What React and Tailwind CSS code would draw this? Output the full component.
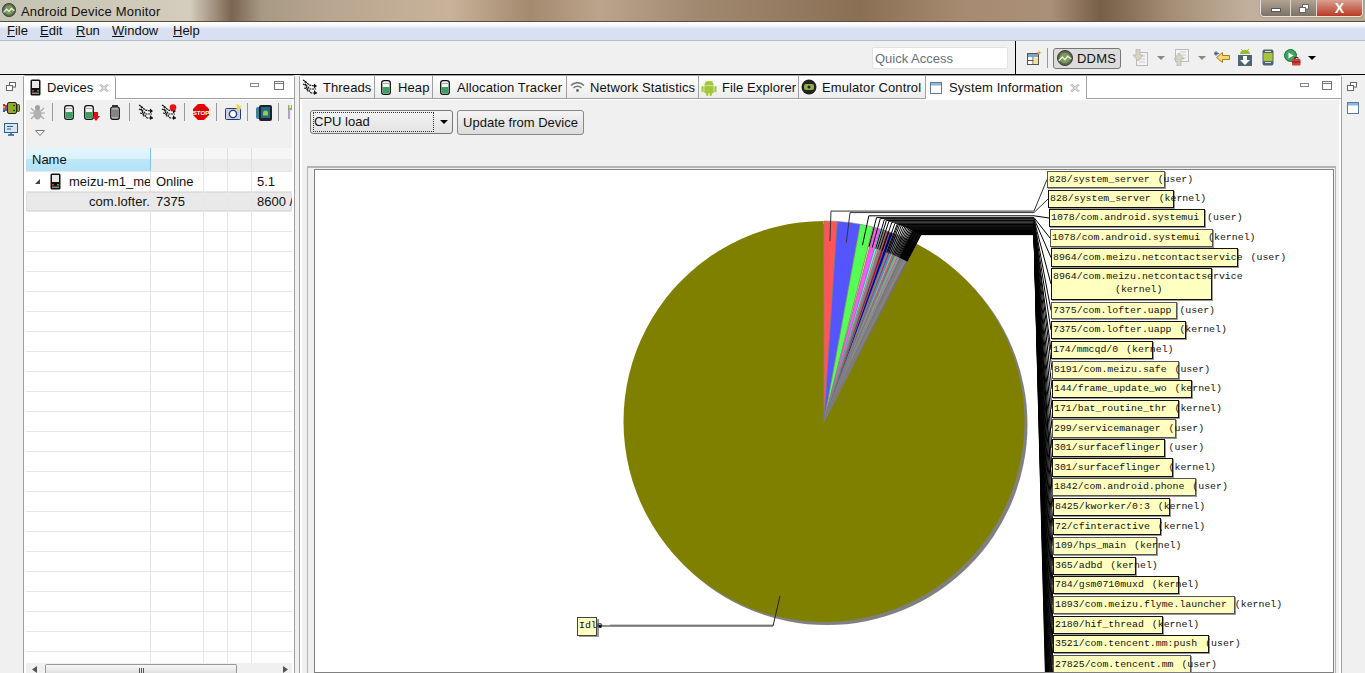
import React from "react";

const LABELS = [
  [1047, 1165, 171, 188, "828/system_server (user)"],
  [1048, 1174, 190, 208, "828/system_server (kernel)"],
  [1049, 1205, 209, 227, "1078/com.android.systemui (user)"],
  [1050, 1213, 229, 247, "1078/com.android.systemui (kernel)"],
  [1051, 1238, 248, 267, "8964/com.meizu.netcontactservice (user)"],
  [1051, 1212, 268, 300, "8964/com.meizu.netcontactservice"],
  [1051, 1177, 302, 319, "7375/com.lofter.uapp (user)"],
  [1051, 1186, 321, 339, "7375/com.lofter.uapp (kernel)"],
  [1051, 1153, 341, 359, "174/mmcqd/0 (kernel)"],
  [1052, 1179, 361, 379, "8191/com.meizu.safe (user)"],
  [1052, 1192, 380, 398, "144/frame_update_wo (kernel)"],
  [1052, 1179, 400, 418, "171/bat_routine_thr (kernel)"],
  [1052, 1176, 419, 438, "299/servicemanager (user)"],
  [1052, 1165, 439, 457, "301/surfaceflinger (user)"],
  [1052, 1173, 458, 477, "301/surfaceflinger (kernel)"],
  [1052, 1196, 478, 496, "1842/com.android.phone (user)"],
  [1053, 1170, 498, 516, "8425/kworker/0:3 (kernel)"],
  [1053, 1161, 518, 535, "72/cfinteractive (kernel)"],
  [1053, 1157, 537, 555, "109/hps_main (kernel)"],
  [1053, 1136, 557, 575, "365/adbd (kernel)"],
  [1053, 1179, 576, 594, "784/gsm0710muxd (kernel)"],
  [1053, 1235, 596, 614, "1893/com.meizu.flyme.launcher (kernel)"],
  [1053, 1163, 616, 634, "2180/hif_thread (kernel)"],
  [1053, 1209, 635, 653, "3521/com.tencent.mm:push (user)"],
  [1053, 1191, 655, 675, "27825/com.tencent.mm (user)"],
];

const COLORS = ["#ff5555","#5555ff","#55ff55","#ffff55","#ff55ff","#55ffff","#ffafaf","#808080","#c00000","#0000c0","#00c000","#c0c000","#c000c0","#00c0c0","#c0c0c0"];
const WIDTHS = [3.8,6.6,3.8,0.5,1.6,0.7,0.5,0.9,0.8,1.0,0.3,0.3,0.5,0.5,0.5,0.45,0.4,0.4,0.35,0.35,0.3,0.3,...Array(18).fill(2.65/18)];
const CX = 824, CY = 421.5, R = 200.5;
const pt = (deg, r, cx = CX, cy = CY) => {
  const a = (deg * Math.PI) / 180;
  return [cx + r * Math.sin(a), cy - r * Math.cos(a)];
};
const SLICES = (() => {
  let a = 0;
  return WIDTHS.map((w, i) => {
    const s = { from: a, to: a + w, mid: a + w / 2, color: COLORS[i % COLORS.length] };
    a += w;
    return s;
  });
})();
const arc = (from, to, r = R) => {
  const [x1, y1] = pt(from, r);
  const [x2, y2] = pt(to, r);
  return `M${CX} ${CY}L${x1} ${y1}A${r} ${r} 0 ${to - from > 180 ? 1 : 0} 1 ${x2} ${y2}Z`;
};

function Chart() {
  const end = SLICES[SLICES.length - 1].to;
  return (
    <svg width="1018" height="502" viewBox="315 170 1018 502" className="block bg-white">
      <circle cx={CX + 3} cy={CY + 3} r={R} fill="#808080" />
      <path d={arc(end, 359.9)} fill="#808000" />
      {SLICES.map((s, i) => (
        <path key={i} d={arc(s.from, s.to)} fill={s.color} stroke="#808080" strokeWidth="0.6" />
      ))}
      {SLICES.map((s, i) => {
        const [x1, y1] = pt(s.mid, R * 0.9);
        const [x2, y2] = pt(s.mid, R * 1.05);
        let lx = 1053, ly = 665 + (i - 24) * 20;
        if (i < LABELS.length) {
          lx = LABELS[i][0];
          ly = (LABELS[i][2] + LABELS[i][3]) / 2;
        }
        return (
          <polyline key={i} points={`${x1},${y1} ${x2},${y2} 1034,${y2} ${lx},${ly}`} fill="none" stroke={i < 2 ? "#333" : "#000"} strokeWidth="1" />
        );
      })}
      <line x1="610" y1="625" x2="773" y2="625" stroke="#999" strokeWidth="1" />
      <polyline points="780,596 773,626 600,626" fill="none" stroke="#222" strokeWidth="1" />
      <circle cx="600" cy="626" r="1.6" fill="#000" />
      <rect x="579" y="619" width="20" height="18" fill="#999" />
      <rect x="577.5" y="617.5" width="19" height="18" fill="#ffffc0" stroke="#444" />
      <text x="579" y="628" fontFamily="'Liberation Mono', monospace" fontSize="9.9" fill="#111">Idle</text>
      {LABELS.map(([x1, x2, y1, y2], i) => (
        <g key={i}>
          <rect x={x1 + 1} y={y1 + 1} width={x2 - x1} height={y2 - y1} fill="#999" />
          <rect x={x1 + 0.5} y={y1 + 0.5} width={x2 - x1 - 1} height={y2 - y1 - 1} fill="#ffffc0" stroke={i % 3 === 0 ? "#555" : "#111"} />
        </g>
      ))}
      {LABELS.map(([x1, x2, y1, y2, t], i) => (
        <text key={i} x={x1 + 2} y={i === 5 ? y1 + 11 : (y1 + y2) / 2 + 2} wordSpacing="2" fontFamily="'Liberation Mono', monospace" fontSize="9.9" fill="#111">{t}</text>
      ))}
      <text x="1115" y="292" fontFamily="'Liberation Mono', monospace" fontSize="9.9" fill="#111">(kernel)</text>
    </svg>
  );
}

const S = ({ w = 16, h = 16, vb, children, className = "" }) => (
  <svg width={w} height={h} viewBox={vb || `0 0 ${w} ${h}`} className={`block shrink-0 ${className}`}>{children}</svg>
);

const Phone = () => (
  <S w={11} h={17}>
    <rect x="0.5" y="0.5" width="10" height="16" rx="1.5" fill="#111" />
    <rect x="2" y="2" width="7" height="7" fill="#e8e8e8" />
    <rect x="2" y="11" width="2" height="1.5" fill="#d33" />
    <rect x="7" y="11" width="2" height="1.5" fill="#4a4" />
    <rect x="2" y="13.5" width="7" height="1.5" fill="#888" />
  </S>
);
const Can = ({ w = 10, h = 15 }) => (
  <S w={w} h={h} vb="0 0 10 15">
    <rect x="0.7" y="0.7" width="8.6" height="13.6" rx="2.4" fill="#f4f4f4" stroke="#111" strokeWidth="1.3" />
    <path d="M1.5 7h7v5q0 1.500-1.500 1.500h-4q-1.500 0-1.500-1.500z" fill="#3f9f60" />
    <rect x="2" y="3" width="6" height="1" fill="#aaa" />
  </S>
);
const Trash = () => (
  <S w={10} h={15}>
    <rect x="0.700" y="2" width="8.600" height="12.300" rx="2" fill="#b5b5b5" stroke="#111" strokeWidth="1.200" />
    <path d="M3 4.500v7.500M5 4.500v7.500M7 4.500v7.500" stroke="#555" />
    <rect x="2" y="0" width="6" height="2" fill="#333" />
  </S>
);
const Threads = ({ dot }) => (
  <S w={16} h={16}>
    <g fill="none" stroke="#111" strokeWidth="1.200" strokeDasharray="2 .7">
      <path d="M1 1l3 2 3 3 6 1" />
      <path d="M1 5l4 2 3 3 6 0" />
      <path d="M2 9l4 1 3 4 6 0" />
      <path d="M3 2l1 5 2 6" />
    </g>
    <path d="M12 4.500l3 2.500-3 2.500zM12 11l3 3-3 2z" fill="#111" />
    {dot && <circle cx="12" cy="3.500" r="3.300" fill="#ee1111" />}
  </S>
);
const Bug = () => (
  <S w={15} h={16}>
    <g stroke="#a6a6a6" strokeWidth="1.100" fill="none">
      <path d="M1 4l3 3M14 4l-3 3M0 9h4M15 9h-4M1 15l3-3M14 15l-3-3" />
    </g>
    <ellipse cx="7.500" cy="10" rx="4" ry="5.500" fill="#b0b0b0" />
    <circle cx="7.500" cy="3.500" r="2.500" fill="#a0a0a0" />
  </S>
);
const Stop = () => (
  <S w={16} h={16}>
    <path d="M5 0h6l5 5v6l-5 5H5l-5-5V5z" fill="#e00000" />
    <text x="8" y="10.500" textAnchor="middle" fontFamily="'Liberation Sans', sans-serif" fontSize="6.200" fontWeight="700" fill="#fff">STOP</text>
  </S>
);
const Camera = () => (
  <S w={17} h={16}>
    <rect x="0.500" y="4.500" width="15" height="11" rx="1" fill="#c9d2e8" stroke="#28386e" />
    <circle cx="8" cy="10" r="3.600" fill="#fff" stroke="#28386e" strokeWidth="1.400" />
    <path d="M13 0l1 2 3 0-2 2 0 3-2-2-2 1 1-3-1-2z" fill="#f5d53a" />
  </S>
);
const Tablet = () => (
  <S w={16} h={17}>
    <rect x="0" y="3" width="6" height="12" rx="2" fill="#3d7f99" />
    <rect x="3" y="1" width="13" height="16" rx="2" fill="#222" />
    <rect x="5" y="3" width="9" height="11" fill="#1d6a90" />
    <path d="M7 9a2.500 2.500 0 0 1 5 0v2.500H7z" fill="#a4c639" />
  </S>
);
const Android = ({ w = 17, h = 18, color = "#a4c639" }) => (
  <S w={w} h={h} vb="0 0 17 18">
    <path d="M3.500 7a5 5 0 0 1 10 0z" fill={color} />
    <path d="M5 2l1.500 2M12 2l-1.500 2" stroke={color} />
    <rect x="3.500" y="7.500" width="10" height="7.500" rx="1" fill={color} />
    <rect x="0.500" y="7.500" width="2.300" height="6.500" rx="1.100" fill={color} />
    <rect x="14.200" y="7.500" width="2.300" height="6.500" rx="1.100" fill={color} />
    <rect x="5.500" y="14" width="2.300" height="4" rx="1.100" fill={color} />
    <rect x="9.200" y="14" width="2.300" height="4" rx="1.100" fill={color} />
  </S>
);
const RainbowAndroid = () => (
  <S w={17} h={12}>
    <rect x="0" y="2" width="2" height="2" fill="#e02020" />
    <rect x="0" y="4" width="2" height="2" fill="#f0a020" />
    <rect x="0" y="6" width="2" height="2" fill="#30b030" />
    <rect x="0" y="8" width="2" height="2" fill="#3050e0" />
    <rect x="2" y="3" width="2" height="6" fill="#c020c0" />
    <rect x="4.500" y="0.500" width="9" height="11" rx="1.500" fill="#8fae28" stroke="#222" />
    <rect x="14" y="2.500" width="2.500" height="7" rx="1" fill="#8fae28" stroke="#222" strokeWidth="0.800" />
    <circle cx="11" cy="3.500" r="0.800" fill="#111" />
    <circle cx="11" cy="8.500" r="0.800" fill="#111" />
  </S>
);
const Sep = ({ cls = "h-[18px]" }) => <div className={`w-px bg-[#999] shrink-0 ${cls}`} />;
const Logo = ({ s = 18 }) => (
  <S w={s} h={s} vb="0 0 18 18">
    <circle cx="9" cy="9" r="8.500" fill="#57684a" stroke="#333" />
    <circle cx="9" cy="9" r="6" fill="#7f9a5d" />
    <path d="M2 12l4-4 3 3 3-4 4 3" fill="none" stroke="#e8efd8" strokeWidth="1.600" />
  </S>
);
const Min = () => <div className="w-[9px] h-[4px] border border-[#888] bg-white shrink-0" />;
const Max = () => (
  <div className="w-[10px] h-[9px] border border-[#777] bg-white shrink-0 flex flex-col">
    <div className="h-px bg-[#777] mt-px" />
  </div>
);
const Close = () => (
  <S w={10} h={10}>
    <path d="M1 1.500l8 7M9 1.500l-8 7" stroke="#a8a8a8" strokeWidth="2" />
    <path d="M1 1.500l8 7M9 1.500l-8 7" stroke="#fff" strokeWidth="0.700" />
  </S>
);
const Restore = () => (
  <S w={10} h={9}>
    <rect x="3.500" y="0.500" width="6" height="4.500" fill="#fff" stroke="#666" />
    <rect x="0.500" y="3.500" width="6" height="5" fill="#fff" stroke="#666" />
  </S>
);
const WindowIcon = ({ w = 12, h = 12 }) => (
  <S w={w} h={h} vb="0 0 12 12">
    <rect x="0.500" y="0.500" width="11" height="11" fill="#fff" stroke="#5a7ca6" />
    <rect x="1" y="1" width="10" height="2.500" fill="#8fb4d9" />
  </S>
);
const Drop = ({ c = "#888" }) => <div className={`w-0 h-0 border-x-[4px] border-x-transparent border-t-[4px] ${c === "#000" ? "border-t-black" : "border-t-[#888]"}`} />;

const TABS = [
  ["Threads", "w-[75px] pl-[2px] gap-[5px]", <Threads />],
  ["Heap", "w-[58px] pl-[6px] gap-[7px]", <Can />],
  ["Allocation Tracker", "w-[134px] pl-[7px] gap-[7px]", <Can />],
  ["Network Statistics", "w-[132px] pl-[3px] gap-[5px]", (
    <S w={15} h={10}>
      <path d="M1 3.500a9 9 0 0 1 13 0M3.500 6a5.500 5.500 0 0 1 8 0" fill="none" stroke="#777" strokeWidth="1.500" />
      <circle cx="7.500" cy="8.500" r="1.400" fill="#666" />
    </S>
  )],
  ["File Explorer", "w-[100px] pl-[2px] gap-[5px]", <Android w={16} h={17} />],
  ["Emulator Control", "w-[127px] pl-[2px] gap-[5px]", (
    <S w={16} h={16}>
      <circle cx="8" cy="8" r="7.500" fill="#222" />
      <rect x="3" y="5" width="10" height="6" rx="2" fill="#8fae4a" />
      <circle cx="8" cy="8" r="1.500" fill="#222" />
    </S>
  )],
];

const COLS = ["w-[125px]", "w-[53px]", "w-[24px]", "w-[24px]", "flex-1"];
const Row = ({ cells, cls = "", first }) => (
  <div className={`flex h-[20px] shrink-0 border-b border-[#e6e6e6] ${cls}`}>
    {COLS.map((c, i) => (
      <div key={i} className={`${c} h-full overflow-hidden whitespace-nowrap border-r border-[#e6e6e6] last:border-r-0 flex items-center ${i === 0 ? "" : "pl-[5px]"}`}>
        {i === 0 ? first : cells[i]}
      </div>
    ))}
  </div>
);

export default function App() {
  return (
    <div className="w-[1365px] h-[673px] overflow-hidden flex flex-col bg-[#f0f0f0] text-[13px] leading-none text-[#111] font-['Liberation_Sans',sans-serif]">
      {/* title bar */}
      <div className="h-[21px] shrink-0 flex items-start bg-[linear-gradient(90deg,#c4c4b4_0px,#d4ccbc_190px,#7b6550_232px,#a79a82_262px,#b9a690_330px,#c8b29a_450px,#a48a6e_530px,#bca48c_600px,#a08870_700px,#8a6f53_860px,#a68a70_960px,#ab9079_1050px,#775e47_1100px,#a48d74_1170px,#c2b09e_1250px,#b8a890_1365px)]">
        <div className="mt-[3px] ml-[2px]"><Logo s={14} /></div>
        <span className="ml-[5px] mt-[5px] text-[#111] tracking-[0.2px]">Android Device Monitor</span>
        <div className="ml-auto mr-[2px] flex h-[17px] w-[103px] border border-t-0 border-[#e8e4de] rounded-b-[4px] overflow-hidden shadow-[0_0_1px_#333]">
          <div className="w-[29px] flex items-center justify-center bg-[linear-gradient(#b2a391,#7d7266)]">
            <div className="w-[10px] h-[4px] mt-[4px] bg-white border border-[#555]" />
          </div>
          <div className="w-[27px] flex items-center justify-center border-x border-[#ddd8d0] bg-[linear-gradient(#b2a391,#7d7266)]">
            <Restore />
          </div>
          <div className="flex-1 flex items-center justify-center bg-[linear-gradient(#d8a090,#b83a24)] text-white font-bold text-[14px]">X</div>
        </div>
      </div>
      {/* menu */}
      <div className="h-[20px] shrink-0 flex items-end pb-[3px] border-b border-[#b4bcc8] border-t border-t-[#5c4c3c] bg-[linear-gradient(#ffffff_0px,#f4f6fb_4px,#d9e0f1_7px,#d9e0f1_100%)]">
        <span className="ml-[7px] w-[33px]"><span className="underline">F</span>ile</span>
        <span className="w-[36px]"><span className="underline">E</span>dit</span>
        <span className="w-[36px]"><span className="underline">R</span>un</span>
        <span className="w-[61px]"><span className="underline">W</span>indow</span>
        <span><span className="underline">H</span>elp</span>
      </div>
      {/* toolbar */}
      <div className="h-[34px] shrink-0 flex items-center border-b border-black relative">
        <div className="ml-[872px] w-[136px] h-[22px] bg-white border border-[#e2e2e2] rounded-[2px] flex items-center pl-[2px] text-[#66707c] mt-[1px]">Quick Access</div>
        <div className="ml-[7px] w-px self-stretch bg-black rounded-b" />
        <div className="ml-[11px]">
          <S w={15} h={16}>
            <rect x="0.500" y="3.500" width="11" height="11" fill="#fff" stroke="#555" />
            <rect x="1" y="4" width="10" height="3" fill="#7ea6cc" />
            <path d="M6 7v7M1 10.500h10" stroke="#555" />
            <rect x="6.500" y="7.500" width="4.500" height="6.500" fill="#f3dfa0" />
            <path d="M12 0l.8 2 2 .8-2 .8-.8 2-.8-2-2-.8 2-.8z" fill="#e2b23c" />
          </S>
        </div>
        <div className="ml-[5px]"><Sep cls="h-[20px]" /></div>
        <div className="ml-[5px] w-[68px] h-[21px] border border-[#777] rounded-[3px] bg-[#dcdcdc] flex items-center pl-[3px] gap-[4px] mt-[1px]">
          <Logo s={16} /><span className="text-[#111] tracking-[0.2px]">DDMS</span>
        </div>
        <div className="ml-[12px]">
          <S w={15} h={17}>
            <rect x="3.500" y="3.500" width="11" height="13" fill="#f3f3f3" stroke="#bbb" />
            <path d="M6 7h6M6 10h6M6 13h6" stroke="#ccc" />
            <path d="M3 0h4v6h3l-5 6-5-6h3z" fill="#d8d4c0" stroke="#aaa" strokeWidth="0.600" />
          </S>
        </div>
        <div className="ml-[9px]"><Drop /></div>
        <div className="ml-[9px]">
          <S w={15} h={17}>
            <rect x="1.500" y="0.500" width="13" height="12" fill="#f3f3f3" stroke="#bbb" />
            <path d="M6 3h6M6 6h6M6 9h6" stroke="#ccc" />
            <path d="M3 17h4v-7h3l-5-6-5 6h3z" fill="#d8d4c0" stroke="#aaa" strokeWidth="0.600" />
          </S>
        </div>
        <div className="ml-[9px]"><Drop /></div>
        <div className="ml-[8px]">
          <S w={16} h={13}>
            <path d="M15.500 4.500h-7v-3l-6 5 6 5v-3h7z" fill="#f5d76e" stroke="#a87f1e" />
            <path d="M2 0v5M0 2.500h5M0.500 1l3 3M3.500 1l-3 3" stroke="#1f4f96" strokeWidth="0.800" />
          </S>
        </div>
        <div className="ml-[8px]">
          <S w={14} h={17}>
            <path d="M3 0l2 2M11 0l-2 2" stroke="#8fb82a" />
            <path d="M2 5a5 4 0 0 1 10 0z" fill="#97bd2c" />
            <rect x="0" y="6" width="14" height="11" fill="#4d6475" />
            <path d="M5 7h4v4h3l-5 5-5-5h3z" fill="#fff" />
          </S>
        </div>
        <div className="ml-[10px]">
          <S w={12} h={17}>
            <rect x="0.500" y="0.500" width="11" height="16" rx="2" fill="#4d6475" />
            <rect x="1.500" y="4" width="9" height="8" fill="#a7c537" />
            <path d="M3 13.500h6M3 2.500h6" stroke="#ddd" />
          </S>
        </div>
        <div className="ml-[10px]">
          <S w={17} h={17}>
            <circle cx="6.500" cy="6.500" r="6" fill="#39a85a" stroke="#17703a" />
            <path d="M4.500 3.500l5 3-5 3z" fill="#fff" />
            <rect x="8" y="10" width="8.500" height="6.500" rx="1" fill="#c8443c" />
            <path d="M10.500 10V8.500h3.500V10M8 13h8.500" stroke="#7a1d18" fill="none" />
          </S>
        </div>
        <div className="ml-[7px]"><Drop c="#000" /></div>
      </div>
      {/* body */}
      <div className="flex-1 min-h-0 flex">
        <div className="w-[23px] shrink-0 flex flex-col items-center">
          <div className="mt-[7px] ml-[-2px]"><Restore /></div>
          <div className="mt-[11px] ml-[-1px]"><RainbowAndroid /></div>
          <div className="mt-[9px] ml-[-2px]">
            <S w={14} h={13}>
              <rect x="0.500" y="0.500" width="13" height="9" fill="#d8e6f4" stroke="#2a5f98" />
              <path d="M3 3.500h6M3 6h4" stroke="#2a5f98" />
              <path d="M4 12h6M7 10v2" stroke="#2a5f98" strokeWidth="1.400" />
            </S>
          </div>
        </div>
        {/* devices */}
        <div className="w-[272px] shrink-0 flex flex-col bg-white border-x border-t border-[#a0a0a0] rounded-t-[3px]">
          <div className="h-[23px] shrink-0 flex border-b border-[#a0a0a0] bg-white relative">
            <div className="w-[92px] h-[23px] flex items-center pl-[6px] bg-white border-r border-[#a0a0a0] relative z-10 rounded-tr-[3px]">
              <Phone /><span className="ml-[6px]">Devices</span>
              <div className="ml-[6px]"><Close /></div>
            </div>
            <div className="ml-auto flex items-center pb-[4px]">
              <Min />
              <div className="ml-[15px] mr-[10px]"><Max /></div>
            </div>
          </div>
          <div className="flex-1 min-h-0 flex flex-col mx-[2px] mt-px bg-white">
            <div className="h-[48px] shrink-0 bg-[#f0f0f0] flex flex-col">
              <div className="h-[24px] flex items-center overflow-hidden">
                <div className="ml-[4px]"><Bug /></div>
                <div className="ml-[7px]"><Sep /></div>
                <div className="ml-[11px]"><Can /></div>
                <div className="ml-[10px] relative">
                  <Can />
                  <S w={8} h={9} className="absolute left-[8px] top-[7px]"><path d="M2 0h4v4h2L4 9 0 4h2z" fill="#e01010" /></S>
                </div>
                <div className="ml-[16px]"><Trash /></div>
                <div className="ml-[9px]"><Sep /></div>
                <div className="ml-[8px]"><Threads /></div>
                <div className="ml-[7px]"><Threads dot /></div>
                <div className="ml-[7px]"><Sep /></div>
                <div className="ml-[8px]"><Stop /></div>
                <div className="ml-[7px]"><Sep /></div>
                <div className="ml-[8px]"><Camera /></div>
                <div className="ml-[5px]"><Sep /></div>
                <div className="ml-[8px]"><Tablet /></div>
                <div className="ml-[6px]"><Sep /></div>
                <div className="ml-[9px]">
                  <S w={8} h={14}><path d="M0 0h1.500v3H0zM3 0h1.500v3H3zM6 0h1.500v3H6z" fill="#88b85a" /><rect x="0" y="3" width="2" height="11" fill="#b79ad1" /><rect x="5" y="3" width="2" height="11" fill="#b79ad1" /><rect x="0" y="3" width="7" height="2" fill="#88b85a" /></S>
                </div>
              </div>
              <div className="ml-[9px] mt-[6px]">
                <S w={10} h={6}><path d="M0.500 0.500h9l-4.500 5z" fill="#fff" stroke="#777" /></S>
              </div>
            </div>
            <div className="flex-1 min-h-0 overflow-hidden flex flex-col">
              <div className="h-[24px] shrink-0 flex bg-[linear-gradient(#f6f6f6_0,#f6f6f6_50%,#ececec_50%,#ececec_100%)] border-b border-[#e6e6e6]">
                <div className="w-[125px] flex items-center pl-[6px] border-r border-[#7fc6e8] bg-[linear-gradient(#e4f6fd_0,#d8f1fc_50%,#bde6f9_50%,#b4e2f8_100%)]">Name</div>
                <div className="w-[53px] border-r border-[#e0e0e0]" />
                <div className="w-[24px] border-r border-[#e0e0e0]" />
                <div className="w-[24px] border-r border-[#e0e0e0]" />
              </div>
              <Row
                cells={["", "Online", "", "", "5.1"]}
                first={
                  <div className="flex items-center pl-[8px]">
                    <S w={7} h={7}><path d="M6 1v5H1z" fill="#444" /></S>
                    <div className="ml-[9px]"><Phone /></div>
                    <span className="ml-[8px]">meizu-m1_mete</span>
                  </div>
                }
              />
              <Row
                cls="bg-[#e9e9e9] shadow-[inset_0_0_0_1px_#dcdcdc] rounded-[2px]"
                cells={["", "7375", "", "", "8600 /"]}
                first={<span className="ml-auto tracking-[0.1px]">com.lofter.</span>}
              />
              {Array.from({ length: 23 }).map((_, i) => <Row key={i} cells={["", "", "", "", ""]} first={null} />)}
            </div>
            <div className="h-[10px] shrink-0 bg-[#f0f0f0] flex items-start relative">
              <S w={6} h={7} className="ml-[6px] mt-[3px]"><path d="M5 0v7L0 3.500z" fill="#555" /></S>
              <div className="ml-[7px] w-[192px] h-[10px] mt-px border border-b-0 border-[#999] rounded-t-[2px] bg-[linear-gradient(#f8f8f8,#dcdcdc)] flex justify-center pt-[3px] gap-px">
                <div className="w-px h-[6px] bg-[#555]" /><div className="w-px h-[6px] bg-[#555]" /><div className="w-px h-[6px] bg-[#555]" />
              </div>
              <S w={6} h={7} className="ml-[45px] mt-[3px]"><path d="M1 0v7l5-3.500z" fill="#555" /></S>
            </div>
          </div>
        </div>
        <div className="w-[4px] shrink-0" />
        {/* main */}
        <div className="w-[1043px] shrink-0 flex flex-col bg-white border-x border-t border-[#a0a0a0] rounded-t-[3px]">
          <div className="h-[23px] shrink-0 flex border-b border-[#a0a0a0] bg-white">
            {TABS.map(([t, w, ic]) => (
              <div key={t} className={`${w} shrink-0 h-[22px] flex items-center whitespace-nowrap border-r border-[#a0a0a0] bg-[linear-gradient(#ffffff,#ececec)] tracking-[0.1px]`}>
                {ic}<span>{t}</span>
              </div>
            ))}
            <div className="w-[161px] shrink-0 h-[23px] flex items-center pl-[4px] bg-white border-r border-[#a0a0a0] relative z-10">
              <WindowIcon />
              <span className="ml-[7px] tracking-[0.1px]">System Information</span>
              <div className="ml-[7px]"><Close /></div>
            </div>
            <div className="ml-auto flex items-center pb-[4px]">
              <Min />
              <div className="ml-[13px] mr-[9px]"><Max /></div>
            </div>
          </div>
          <div className="flex-1 min-h-0 ml-[2px] mr-[2px] mt-px bg-[#f0f0f0] flex flex-col">
            <div className="flex items-start pt-[10px] h-[66px] shrink-0 pl-[8px]">
              <div className="w-[143px] h-[24px] border border-[#777] rounded-[3px] bg-[linear-gradient(#f4f4f4,#e2e2e2)] flex items-center pl-[2px]">
                <div className="w-[121px] h-[20px] border border-dotted border-[#333] flex items-center pb-[2px]">CPU load</div>
                <div className="ml-[6px]"><Drop c="#000" /></div>
              </div>
              <div className="ml-[4px] w-[127px] h-[25px] border border-[#888] rounded-[3px] bg-[linear-gradient(#f4f4f4,#dcdcdc)] flex items-center justify-center whitespace-nowrap">Update from Device</div>
            </div>
            <div className="ml-[5px] w-[1029px] flex-1 min-h-0 overflow-hidden border-t-2 border-x border-[#b4b4b4] pt-px pl-[6px]">
              <div className="w-[1020px] h-[504px] border border-[#808080]">
                <Chart />
              </div>
            </div>
          </div>
        </div>
        <div className="flex-1 flex flex-col items-center">
          <div className="mt-[7px] mr-[3px]"><Restore /></div>
          <div className="mt-[11px] mr-[2px]"><WindowIcon /></div>
        </div>
      </div>
    </div>
  );
}
